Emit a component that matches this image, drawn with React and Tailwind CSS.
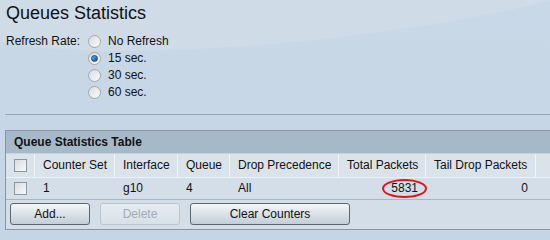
import React from "react";

const cols = [
  { w: 29, label: null },
  { w: 80, label: "Counter Set" },
  { w: 63, label: "Interface" },
  { w: 52, label: "Queue" },
  { w: 109, label: "Drop Precedence" },
  { w: 87, label: "Total Packets" },
  { w: 110, label: "Tail Drop Packets" },
  { w: 40, label: "" },
];

function Checkbox() {
  return (
    <span className="block w-[13px] h-[13px] border border-[#8e979f] bg-gradient-to-br from-[#d9dde1] to-[#f7f8f9]" />
  );
}

function Radio({ checked }) {
  return (
    <span className="relative flex items-center justify-center w-[13px] h-[13px] rounded-full border border-[#a2a8ae] bg-gradient-to-br from-[#d8dbde] to-[#fbfbfb]">
      {checked && (
        <span className="block w-[7px] h-[7px] rounded-full bg-gradient-to-br from-[#6fb3e8] to-[#0a4f8f] border border-[#1c4e7c]" />
      )}
    </span>
  );
}

export default function App() {
  const rates = ["No Refresh", "15 sec.", "30 sec.", "60 sec."];
  const data = ["1", "g10", "4", "All", "5831", "0", ""];
  return (
    <div
      className="relative w-[550px] h-[240px] overflow-hidden text-[#111] bg-gradient-to-b from-[#c9d8e7] to-[#c4d5e5]"
      style={{ fontFamily: '"Liberation Sans", Arial, sans-serif' }}
    >
      <div className="pointer-events-none absolute -left-[40px] -top-[70px] w-[700px] h-[110px] rounded-[50%] bg-[#d3dfea] opacity-60 rotate-[-6deg]" />
      <div className="relative">
        <div className="h-[33px] pl-[6px] pt-[4px] text-[18px] leading-[18px]">Queues Statistics</div>
        <div className="flex pl-[6px] text-[12px] leading-[17px]">
          <div className="w-[82px]">Refresh Rate:</div>
          <div className="flex flex-col">
            {rates.map((r, i) => (
              <div key={r} className="flex items-center h-[17px]">
                <Radio checked={i === 1} />
                <span className="ml-[7px]">{r}</span>
              </div>
            ))}
          </div>
        </div>
        <div className="mt-[13px] ml-[5px] h-px bg-[#98a9b8]" />
        <div className="mt-[15px] ml-[5px] w-[600px] border border-[#8696a4] bg-[#d4dee8] text-[12px]">
          <div className="h-[23px] leading-[23px] pl-[8px] font-bold bg-[#a6b9c9] border-b border-[#c6d2dd]">
            Queue Statistics Table
          </div>
          <div className="flex h-[24px] border-b border-[#eef2f6] bg-[#dbe3ea]">
            {cols.map((c, i) => (
              <div
                key={i}
                className="shrink-0 h-[23px] leading-[23px] pl-[8px] pr-[2px] border-r border-[#f2f5f8] flex items-center whitespace-nowrap overflow-hidden"
                style={{ width: c.w }}
              >
                {i === 0 ? <span className="ml-[0px]"><Checkbox /></span> : c.label}
              </div>
            ))}
          </div>
          <div className="flex h-[22px] border-b border-[#a9b6c2]">
            {cols.map((c, i) => (
              <div
                key={i}
                className={
                  "relative shrink-0 h-[21px] leading-[21px] pl-[8px] pr-[8px] flex items-center whitespace-nowrap " +
                  (i === 5 || i === 6 ? "justify-end" : "")
                }
                style={{ width: c.w }}
              >
                {i === 0 ? (
                  <span className="ml-[0px]"><Checkbox /></span>
                ) : (
                  data[i - 1]
                )}
                {i === 5 && (
                  <span className="absolute left-[43px] top-[1px] w-[45px] h-[19px] rounded-[50%] border-2 border-[#e0141b]" />
                )}
              </div>
            ))}
          </div>
          <div className="flex h-[29px] pt-[3px] pl-[4px] gap-[10px]">
            <button className="w-[80px] h-[22px] rounded-[3px] border border-[#5b6670] bg-gradient-to-b from-[#f3f6f8] to-[#c3ced7] text-[12px] text-[#111]">
              Add...
            </button>
            <button className="w-[80px] h-[22px] rounded-[3px] border border-[#b9c5cf] bg-gradient-to-b from-[#e6ecf1] to-[#d8e1e8] text-[12px] text-[#a3abb3]">
              Delete
            </button>
            <button className="w-[160px] h-[22px] rounded-[3px] border border-[#5b6670] bg-gradient-to-b from-[#f3f6f8] to-[#c3ced7] text-[12px] text-[#111]">
              Clear Counters
            </button>
          </div>
        </div>
      </div>
    </div>
  );
}
